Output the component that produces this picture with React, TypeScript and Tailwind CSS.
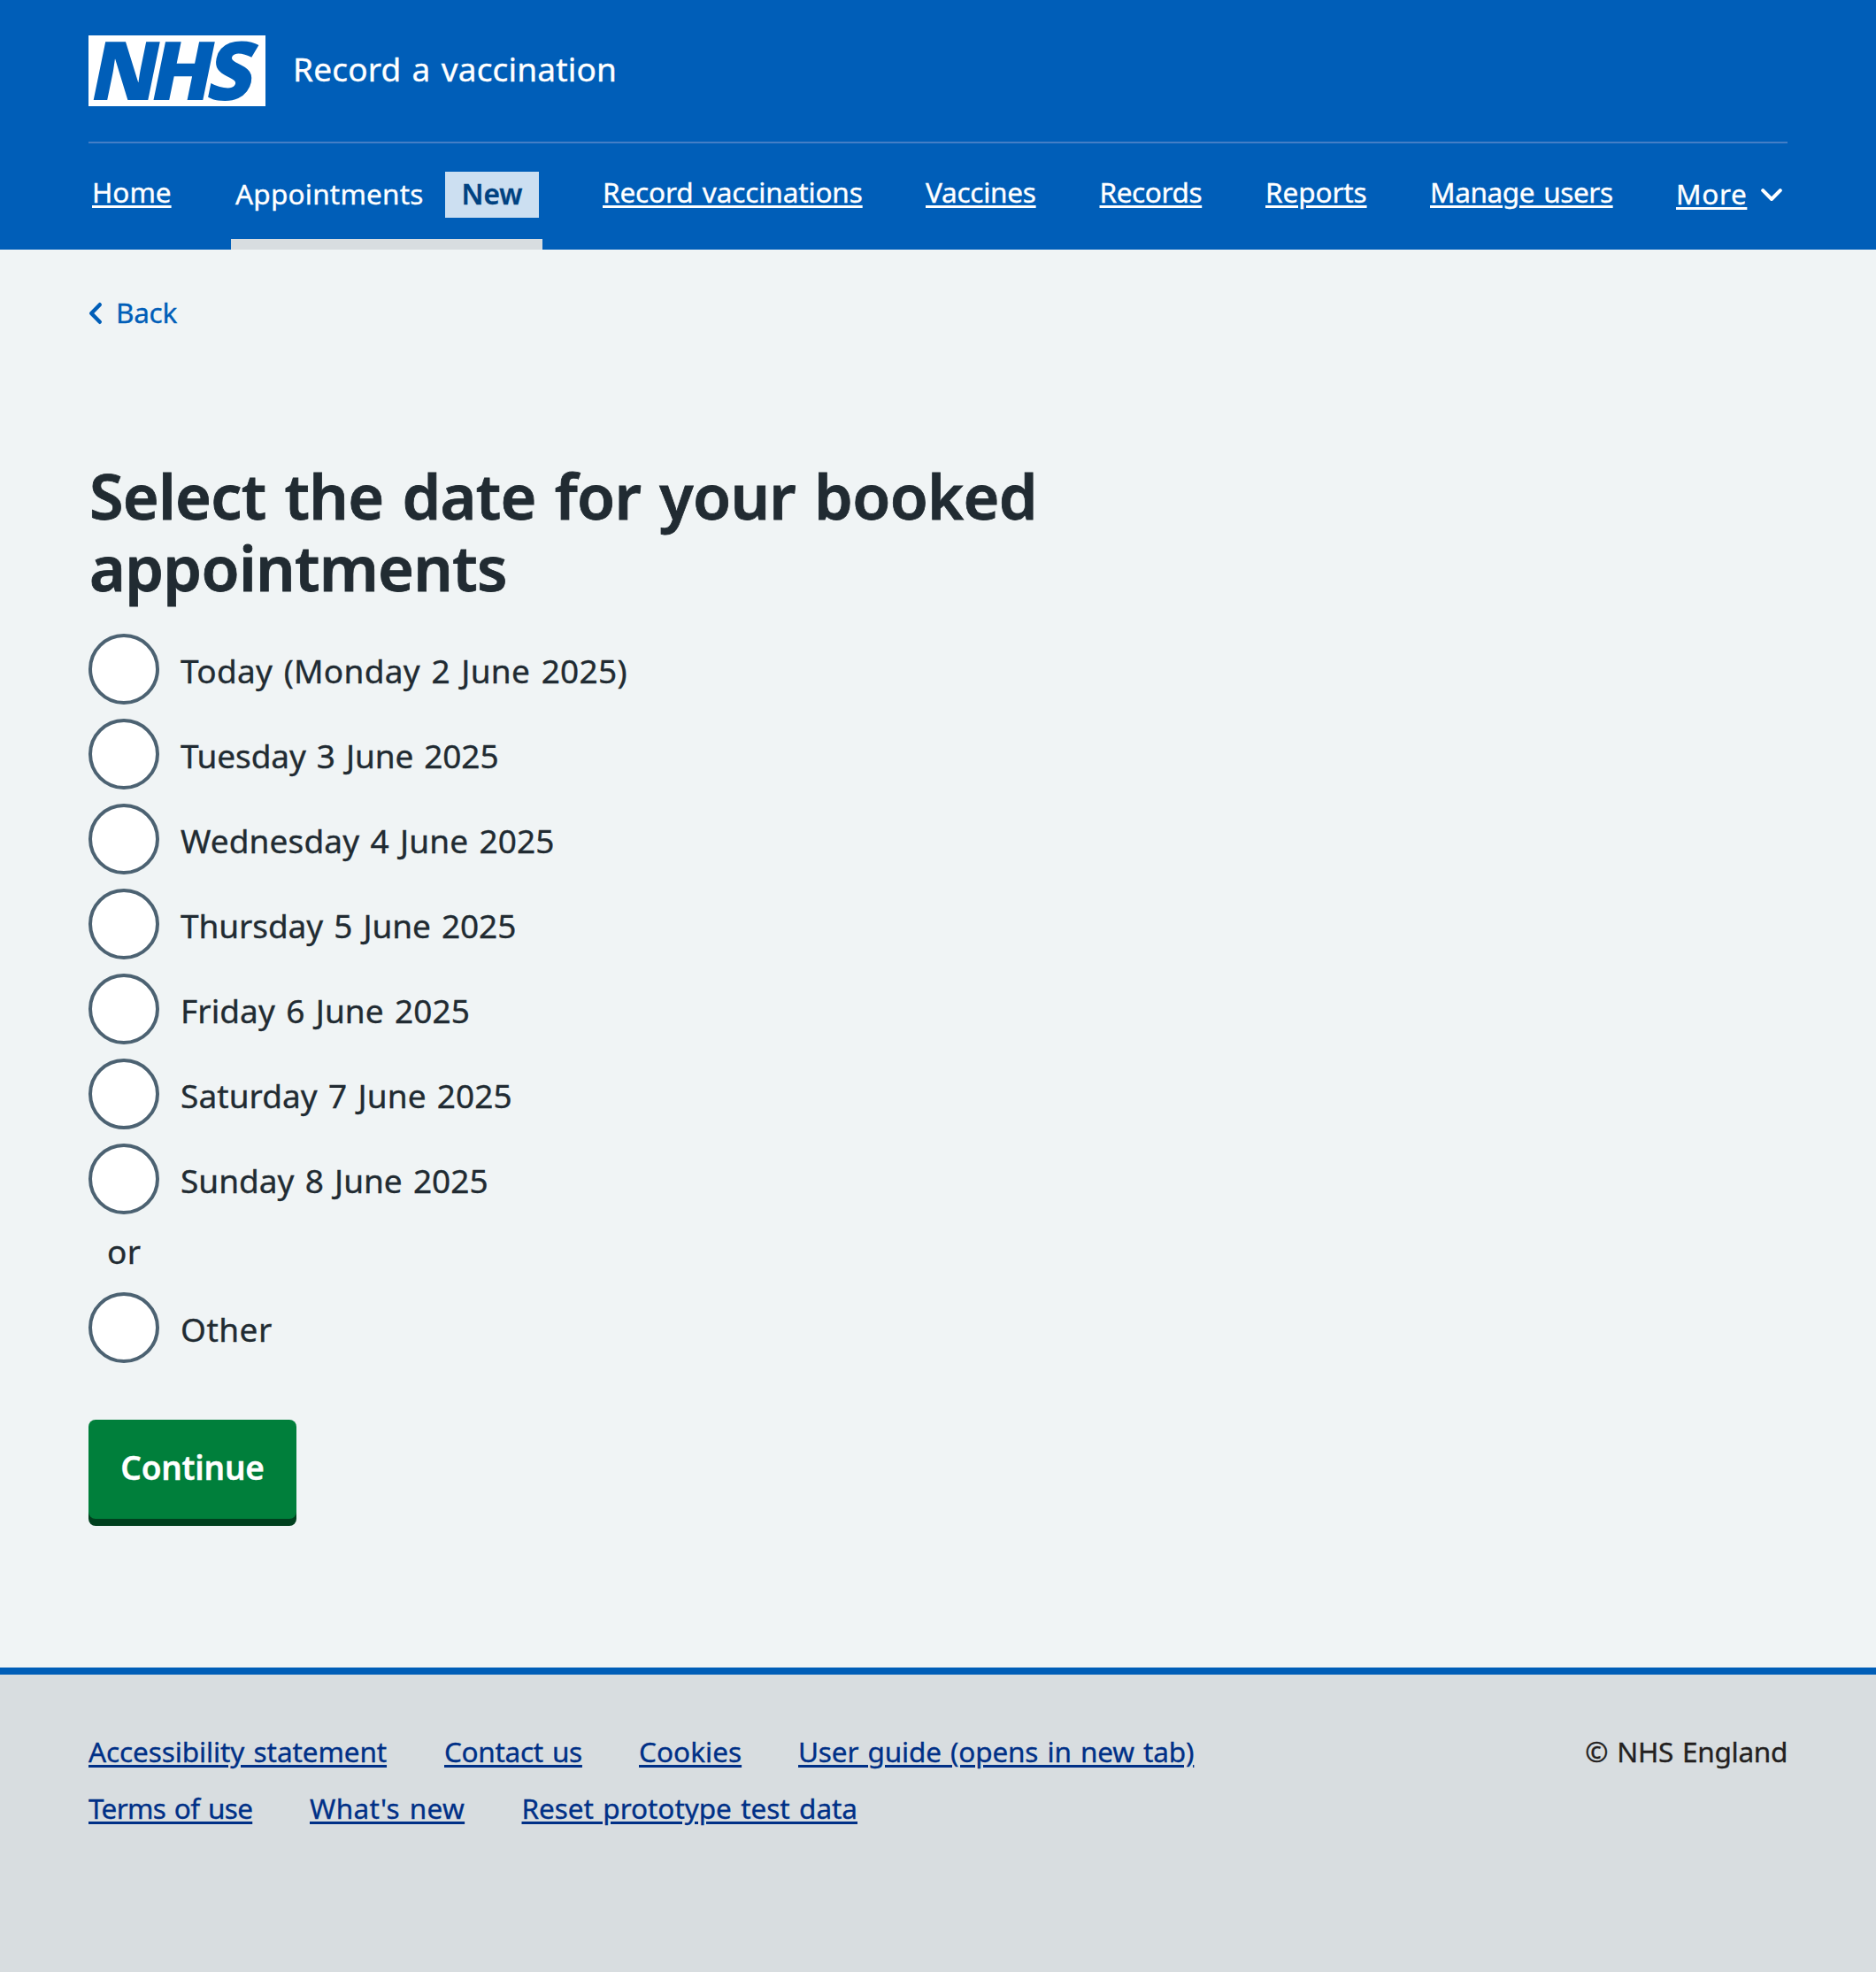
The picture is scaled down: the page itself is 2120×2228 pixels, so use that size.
import type { ReactNode } from 'react';

const link = 'whitespace-nowrap underline decoration-[3px] underline-offset-[3px]';

const navTail = [
  { text: 'Record vaccinations', cls: 'w-[301px] tracking-[-0.12px]' },
  { text: 'Vaccines', cls: 'w-[132.5px] tracking-[-0.25px]' },
  { text: 'Records', cls: 'w-[123.5px] tracking-[-0.38px]' },
  { text: 'Reports', cls: 'w-[122px] tracking-[-0.1px]' },
  { text: 'Manage users', cls: 'w-[214px] tracking-[-0.39px]' },
];

const dates = [
  { text: 'Today (Monday 2 June 2025)', cls: 'tracking-[0.28px]' },
  { text: 'Tuesday 3 June 2025', cls: 'tracking-[-0.12px]' },
  { text: 'Wednesday 4 June 2025', cls: 'tracking-[0.11px]' },
  { text: 'Thursday 5 June 2025', cls: 'tracking-[-0.08px]' },
  { text: 'Friday 6 June 2025', cls: 'tracking-[0.08px]' },
  { text: 'Saturday 7 June 2025', cls: 'tracking-[0.07px]' },
  { text: 'Sunday 8 June 2025', cls: 'tracking-[0px]' },
];

const footerRows = [
  [
    { text: 'Accessibility statement', cls: 'w-[338px] tracking-[-0.1px]' },
    { text: 'Contact us', cls: 'w-[156px] tracking-[-0.3px]' },
    { text: 'Cookies', cls: 'w-[116px] tracking-[0.04px]' },
    { text: 'User guide (opens in new tab)', cls: 'w-[448px] tracking-[-0.16px]' },
  ],
  [
    { text: 'Terms of use', cls: 'w-[186px] tracking-[-0.7px]' },
    { text: "What's new", cls: 'w-[175.5px] tracking-[0.37px]' },
    { text: 'Reset prototype test data', cls: 'w-[379px] tracking-[-0.03px]' },
  ],
];

function Logo() {
  return (
    <svg className="h-20 w-[200px] overflow-visible bg-white" viewBox="0 0 200 80" aria-label="NHS">
      <g fill="#005eb8" fontFamily="Noto Sans, sans-serif" fontWeight="900" fontSize="92" strokeWidth="0">
        <text transform="translate(-1.3 72.5) skewX(-11.6)" textLength="75.5" lengthAdjust="spacingAndGlyphs">N</text>
        <text transform="translate(66.4 72.5) skewX(-11.6)" textLength="69.8" lengthAdjust="spacingAndGlyphs">H</text>
        <text transform="translate(130.4 72.5) skewX(-11.6)" textLength="52.2" lengthAdjust="spacingAndGlyphs">S</text>
      </g>
    </svg>
  );
}

function Radio({ children, cls }: { children: ReactNode; cls: string }) {
  return (
    <label className="flex h-20 items-center">
      <span className="size-20 shrink-0 rounded-full border-4 border-[#4c6272] bg-white" />
      <span className={`ml-6 pt-[3px] text-[37px] leading-[50px] whitespace-nowrap ${cls}`}>{children}</span>
    </label>
  );
}

export default function App() {
  return (
    <div className="flex min-h-[2228px] flex-col bg-[#f0f4f5] font-['Noto_Sans',sans-serif] text-[#212b32] [-webkit-text-stroke:0.35px]">
      <header className="h-[282px] bg-[#005eb8] px-[100px] text-white">
        <div className="flex h-40 items-center">
          <Logo />
          <span className="ml-[31px] pb-1 text-[37px] leading-[50px] tracking-[0.18px] [word-spacing:2.4px]">Record a vaccination</span>
        </div>
        <nav className="flex h-[122px] items-start gap-16 border-t-2 border-[#447ec6] text-[31.5px] leading-[50px] [word-spacing:2.2px]">
          <a className={`mt-[30px] w-[97px] px-1 ${link}`}>Home</a>
          <div className="flex h-[120px] w-[352px] border-b-[12px] border-[#d8dde0] pt-8 pl-[5px]">
            <span className="w-[237px] tracking-[0.22px]">Appointments</span>
            <span className="h-[52px] w-[106px] bg-[#ccdff1] text-center font-semibold text-[#004281]">New</span>
          </div>
          {navTail.map((item) => (
            <a key={item.text} className={`mt-[30px] px-1 ${link} ${item.cls}`}>
              {item.text}
            </a>
          ))}
          <span className="mt-8 flex w-[130px] px-1">
            <span className={`w-[80px] tracking-[0.65px] ${link}`}>More</span>
            <svg className="mt-[18px] ml-4 h-4 w-[24px]" viewBox="0 0 24 16" fill="none" stroke="currentColor" strokeWidth="4" strokeLinecap="round" strokeLinejoin="round">
              <path d="M2.2 3.2 12 13l9.8-9.8" />
            </svg>
          </span>
        </nav>
      </header>

      <main className="flex-1 px-[100px] pt-[46px]">
        <a className="flex items-center text-[31.5px] leading-[50px] text-[#005eb8]">
          <svg className="mt-0.5 h-[26px] w-4" viewBox="0 0 16 26" fill="none" stroke="currentColor" strokeWidth="4.4" strokeLinecap="round" strokeLinejoin="round">
            <path d="M12.8 3.2 3.2 13l9.6 9.8" />
          </svg>
          <span className="ml-[15px] tracking-[-0.29px]">Back</span>
        </a>
        <h1 className="mt-[142px] w-[1200px] pl-px text-[70px] leading-[81px] font-semibold tracking-[-0.72px] [-webkit-text-stroke:0.8px] [word-spacing:3.6px]">
          Select the date for your booked appointments
        </h1>
        <div className="mt-[34px] flex flex-col gap-4 [word-spacing:2.6px]">
          {dates.map((d) => (
            <Radio key={d.text} cls={d.cls}>
              {d.text}
            </Radio>
          ))}
        </div>
        <p className="h-[88px] pl-[21px] text-[37px] leading-[84px] tracking-[0.4px]">or</p>
        <Radio cls="tracking-[0.5px]">Other</Radio>
        <button className="mt-16 flex h-28 w-[235px] items-center justify-center rounded-lg bg-[#007f3b] pb-1 text-[37px] font-semibold tracking-[-0.25px] text-white shadow-[0_8px_0_#00401e]">
          Continue
        </button>
      </main>

      <footer className="flex h-[344px] justify-between border-t-8 border-[#005eb8] bg-[#d8dde0] px-[100px] pt-[55px] text-[31.5px] leading-[64px] [word-spacing:2.2px]">
        <div>
          {footerRows.map((row) => (
            <div key={row[0].text} className="flex gap-16 text-[#003087]">
              {row.map((l) => (
                <a key={l.text} className={`${link} ${l.cls}`}>
                  {l.text}
                </a>
              ))}
            </div>
          ))}
        </div>
        <p className="tracking-[-0.3px] text-[#231f20]">© NHS England</p>
      </footer>
    </div>
  );
}
